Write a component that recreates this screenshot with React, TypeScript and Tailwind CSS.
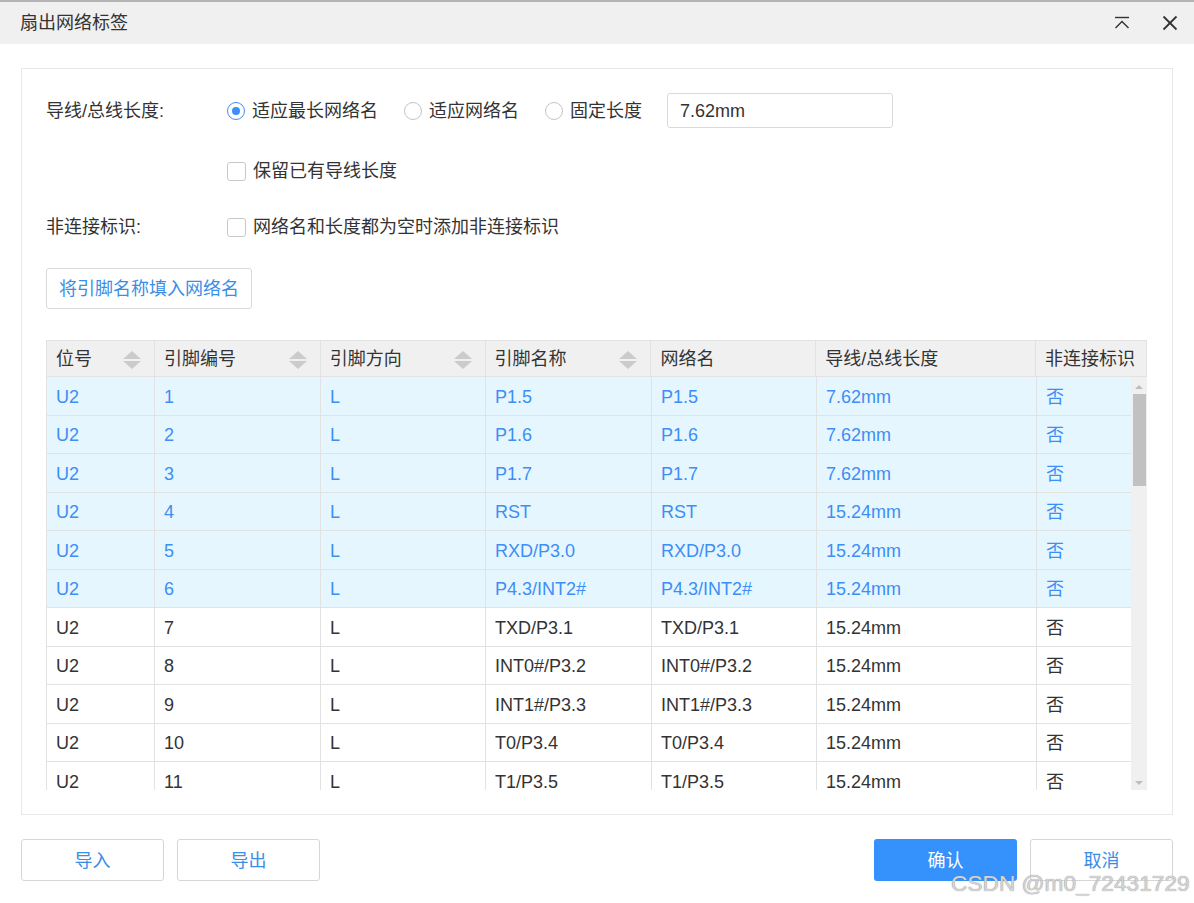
import React from 'react'

const CJK = "font-['Liberation_Sans','Noto_Sans_CJK_SC',sans-serif]"

const COLS = [
  { title: '位号', width: 108, sort: true },
  { title: '引脚编号', width: 166, sort: true },
  { title: '引脚方向', width: 165, sort: true },
  { title: '引脚名称', width: 166, sort: true },
  { title: '网络名', width: 165, sort: false },
  { title: '导线/总线长度', width: 220, sort: false },
  { title: '非连接标识', width: 111, sort: false },
]

const ROWS: { pin: string; name: string; len: string; sel: boolean }[] = [
  { pin: '1', name: 'P1.5', len: '7.62mm', sel: true },
  { pin: '2', name: 'P1.6', len: '7.62mm', sel: true },
  { pin: '3', name: 'P1.7', len: '7.62mm', sel: true },
  { pin: '4', name: 'RST', len: '15.24mm', sel: true },
  { pin: '5', name: 'RXD/P3.0', len: '15.24mm', sel: true },
  { pin: '6', name: 'P4.3/INT2#', len: '15.24mm', sel: true },
  { pin: '7', name: 'TXD/P3.1', len: '15.24mm', sel: false },
  { pin: '8', name: 'INT0#/P3.2', len: '15.24mm', sel: false },
  { pin: '9', name: 'INT1#/P3.3', len: '15.24mm', sel: false },
  { pin: '10', name: 'T0/P3.4', len: '15.24mm', sel: false },
  { pin: '11', name: 'T1/P3.5', len: '15.24mm', sel: false },
]

function SortIcon() {
  return (
    <svg width="18" height="20" viewBox="0 0 18 20" className="shrink-0">
      <polygon points="9,1 18,9 0,9" fill="#cbcbcb" />
      <polygon points="0,11 18,11 9,19" fill="#cbcbcb" />
    </svg>
  )
}

function Radio({ checked, label }: { checked?: boolean; label: string }) {
  return (
    <label className="flex items-center gap-[7px]">
      <span
        className={
          'flex h-[18px] w-[18px] items-center justify-center rounded-full border bg-white ' +
          (checked ? 'border-[#3d8ef5]' : 'border-[#c4c4c4]')
        }
      >
        {checked && <span className="h-[8px] w-[8px] rounded-full bg-[#3d8ef5]" />}
      </span>
      <span className="text-[18px] leading-[24px] text-[#333]">{label}</span>
    </label>
  )
}

function Checkbox({ label }: { label: string }) {
  return (
    <label className="flex items-center gap-[7px]">
      <span className="h-[19px] w-[19px] rounded-[3px] border border-[#c8c8c8] bg-white" />
      <span className="text-[18px] leading-[24px] text-[#333]">{label}</span>
    </label>
  )
}

function FooterButton({ label, primary }: { label: string; primary?: boolean }) {
  return (
    <button
      className={
        'h-[42px] w-[143px] rounded-[3px] pt-[2px] text-[18px] ' +
        (primary
          ? 'bg-[#3592fd] text-white'
          : 'border border-[#d6d6d6] bg-white text-[#3a8ee6]')
      }
    >
      {label}
    </button>
  )
}

export default function App() {
  return (
    <div className={`relative h-[903px] w-[1194px] overflow-hidden bg-white ${CJK}`}>
      <div className="h-[2px] bg-[#b4b4b4]" />

      {/* title bar */}
      <div className="flex h-[42px] items-center justify-between bg-[#f0f0f0] pl-[20px] pr-[16px]">
        <span className="text-[18px] text-[#333]">扇出网络标签</span>
        <div className="flex items-center gap-[32px]">
          <svg width="16" height="14" viewBox="0 0 16 14">
            <line x1="1" y1="1.5" x2="15" y2="1.5" stroke="#333" strokeWidth="1.4" />
            <polyline points="1.5,12 8,5.5 14.5,12" fill="none" stroke="#333" strokeWidth="1.4" />
          </svg>
          <svg width="16" height="16" viewBox="0 0 16 16">
            <line x1="1.5" y1="1.5" x2="14.5" y2="14.5" stroke="#333" strokeWidth="1.8" />
            <line x1="14.5" y1="1.5" x2="1.5" y2="14.5" stroke="#333" strokeWidth="1.8" />
          </svg>
        </div>
      </div>

      {/* body */}
      <div className="px-[21px] pt-[24px]">
        <div className="flex h-[747px] flex-col border border-[#e8e8e8] px-[24px] pt-[24px]">
          <div className="flex items-center">
            <span className="w-[181px] pt-[1px] text-[18px] text-[#333]">导线/总线长度:</span>
            <div className="flex items-center gap-[25px]">
              <Radio checked label="适应最长网络名" />
              <div className="ml-px">
                <Radio label="适应网络名" />
              </div>
              <div className="ml-px">
                <Radio label="固定长度" />
              </div>
              <div className="flex h-[35px] w-[226px] items-center rounded-[3px] border border-[#d9d9d9] px-[12px] pt-[1px] text-[18px] text-[#333]">
                7.62mm
              </div>
            </div>
          </div>

          <div className="mt-[31px] flex h-[24px] items-center pl-[181px]">
            <Checkbox label="保留已有导线长度" />
          </div>

          <div className="mt-[32px] flex h-[24px] items-center">
            <span className="w-[181px] text-[18px] text-[#333]">非连接标识:</span>
            <Checkbox label="网络名和长度都为空时添加非连接标识" />
          </div>

          <div className="mt-[29px]">
            <button className="h-[41px] rounded-[3px] border border-[#d9d9d9] bg-white px-[12px] pt-[1px] text-[18px] text-[#3a8ee6]">
              将引脚名称填入网络名
            </button>
          </div>

          {/* table */}
          <div className="mt-[31px] w-[1101px]">
            <div className="flex h-[37px] border border-[#e2e2e2] bg-[#f0f0f0]">
              {COLS.map((c, i) => (
                <div
                  key={c.title}
                  style={{ width: i === 0 ? c.width - 1 : c.width }}
                  className={
                    'flex items-center justify-between pl-[9px] pr-[13px] pt-[2px] text-[18px] text-[#333] ' +
                    (i > 0 ? 'border-l border-[#e2e2e2]' : '')
                  }
                >
                  <span className="whitespace-nowrap">{c.title}</span>
                  {c.sort && <SortIcon />}
                </div>
              ))}
            </div>

            <div className="flex h-[413px] overflow-hidden">
              <div className="w-[1085px]">
                {ROWS.map((r) => (
                  <div
                    key={r.pin}
                    className={
                      'flex h-[38.5px] border-b border-[#e2e2e2] text-[18px] ' +
                      (r.sel ? 'bg-[#e6f6fe] text-[#3d8ef5]' : 'bg-white text-[#333]')
                    }
                  >
                    {['U2', r.pin, 'L', r.name, r.name, r.len, '否'].map((v, i) => (
                      <div
                        key={i}
                        style={{ width: i === 6 ? 95 : COLS[i].width }}
                        className="flex items-center whitespace-nowrap border-l border-[#e2e2e2] pl-[9px] pt-[3px]"
                      >
                        {v}
                      </div>
                    ))}
                  </div>
                ))}
              </div>
              <div className="flex w-[16px] flex-col items-center bg-[#f0f0f0]">
                <svg width="8" height="6" viewBox="0 0 8 6" className="mt-[7px]">
                  <polygon points="4,1 8,5 0,5" fill="#bdbdbd" />
                </svg>
                <div className="mt-[4px] h-[92px] w-[13px] bg-[#c1c1c1]" />
                <div className="flex-1" />
                <svg width="8" height="6" viewBox="0 0 8 6" className="mb-[4px]">
                  <polygon points="0,1 8,1 4,5" fill="#bdbdbd" />
                </svg>
              </div>
            </div>
          </div>
        </div>
      </div>

      {/* footer */}
      <div className="flex items-center justify-between px-[21px] pt-[24px]">
        <div className="flex gap-[13px]">
          <FooterButton label="导入" />
          <FooterButton label="导出" />
        </div>
        <div className="flex gap-[13px]">
          <FooterButton label="确认" primary />
          <FooterButton label="取消" />
        </div>
      </div>

      <div className="absolute left-[951px] top-[868px] whitespace-nowrap font-['Liberation_Sans',sans-serif] text-[22.7px] leading-[30px] text-[#d4d4d4] [text-shadow:0_0_1px_#7a7a7a]">
        CSDN @m0_72431729
      </div>
    </div>
  )
}
